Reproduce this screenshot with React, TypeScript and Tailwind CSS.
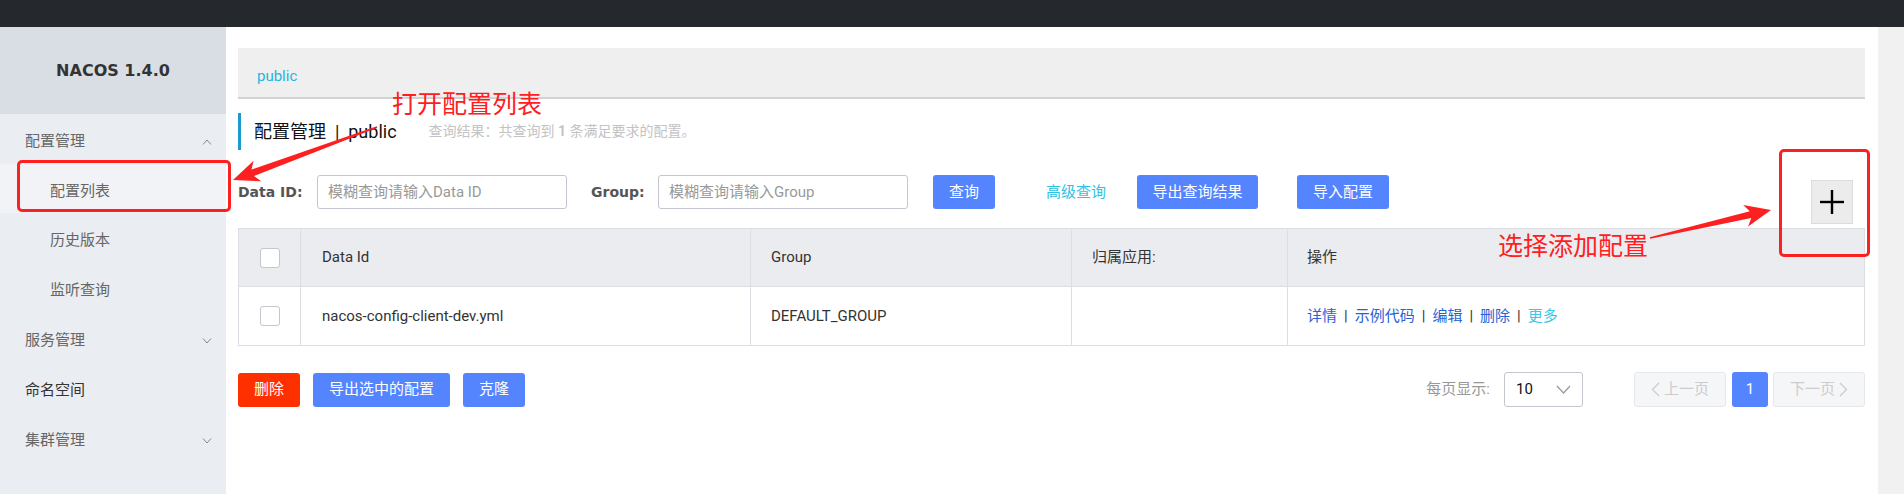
import React from 'react';

const font = { fontFamily: 'Roboto, "Noto Sans CJK SC", sans-serif' };
const boldFont = { fontFamily: '"DejaVu Sans", "Noto Sans CJK SC", sans-serif' };

function arrowPoints(x1: number, y1: number, x2: number, y2: number) {
    const dx = x2 - x1;
    const dy = y2 - y1;
    const len = Math.hypot(dx, dy);
    const ux = dx / len;
    const uy = dy / len;
    const nx = -uy;
    const ny = ux;
    const headLen = 26;
    const headW = 11;
    const bx = x2 - ux * headLen;
    const by = y2 - uy * headLen;
    const nbx = x2 - ux * (headLen - 5);
    const nby = y2 - uy * (headLen - 5);
    const pts = [
        [x1 + nx * 0.8, y1 + ny * 0.8],
        [nbx + nx * 3.5, nby + ny * 3.5],
        [bx + nx * headW, by + ny * headW],
        [x2, y2],
        [bx - nx * headW, by - ny * headW],
        [nbx - nx * 3.5, nby - ny * 3.5],
        [x1 - nx * 0.8, y1 - ny * 0.8],
    ];
    return pts.map((p) => p[0].toFixed(1) + ',' + p[1].toFixed(1)).join(' ');
}

function Chevron({ up }: { up?: boolean }) {
    return (
        <svg width="10" height="6" viewBox="0 0 10 6" className="text-[#888]">
            {up ? (
                <polyline points="1,5.5 5,1 9,5.5" fill="none" stroke="currentColor" strokeWidth="1" />
            ) : (
                <polyline points="1,0.5 5,5 9,0.5" fill="none" stroke="currentColor" strokeWidth="1" />
            )}
        </svg>
    );
}

function Checkbox() {
    return <div className="w-[20px] h-[20px] rounded-[3px] border border-[#c4c6cf] bg-white" />;
}

function Btn({ children, w, red }: { children: React.ReactNode; w: string; red?: boolean }) {
    return (
        <div
            className={`${w} h-[34px] rounded-[3px] flex items-center justify-center whitespace-nowrap text-white text-[15px] ${
                red ? 'bg-[#ff3000]' : 'bg-[#5584ff]'
            }`}
        >
            {children}
        </div>
    );
}

export default function App() {
    return (
        <div className="relative w-[1904px] h-[494px] overflow-hidden bg-white text-[#333]" style={font}>
            <div className="h-[27px] bg-[#25292e]" />
            <div className="flex h-[467px]">
                {/* sidebar */}
                <aside className="w-[226px] bg-[#eaedf1] flex flex-col text-[15px] text-[#666]">
                    <div className="h-[87px] bg-[#d9dee5] flex items-center justify-center text-[16px] font-bold text-[#333]" style={boldFont}>
                        NACOS 1.4.0
                    </div>
                    <div className="h-[50px] pl-[25px] pr-[14px] pt-[5px] flex items-center justify-between">
                        <span>配置管理</span>
                        <Chevron up />
                    </div>
                    <div className="h-[49px] pl-[50px] pt-[5px] flex items-center bg-[#f2f3f6]">配置列表</div>
                    <div className="h-[50px] pl-[50px] pt-[5px] flex items-center">历史版本</div>
                    <div className="h-[50px] pl-[50px] pt-[5px] flex items-center">监听查询</div>
                    <div className="h-[50px] pl-[25px] pr-[14px] pt-[5px] flex items-center justify-between">
                        <span>服务管理</span>
                        <Chevron />
                    </div>
                    <div className="h-[50px] pl-[25px] pt-[5px] flex items-center text-[#333]">命名空间</div>
                    <div className="h-[50px] pl-[25px] pr-[14px] pt-[5px] flex items-center justify-between">
                        <span>集群管理</span>
                        <Chevron />
                    </div>
                </aside>

                {/* main */}
                <main className="flex-1 pl-[12px] pr-[13px] pt-[21px]">
                    <div className="h-[51px] bg-[#efefef] border-b-2 border-[#d2d2d2] pl-[19px] pt-[8px] flex items-center text-[15px] text-[#1fb5dd]">
                        public
                    </div>

                    <div className="mt-[14px] h-[37px] border-l-[3px] border-[#1a9bd0] pl-[13px] flex items-center">
                        <span className="text-[18px] text-[#111]">配置管理&nbsp;&nbsp;|&nbsp;&nbsp;public</span>
                        <span className="ml-[32px] text-[14px] text-[#c3c3c3]">
                            查询结果：共查询到 <b className="font-bold">1</b> 条满足要求的配置。
                        </span>
                    </div>

                    <div className="mt-[25px] flex items-start h-[49px]">
                        <div className="w-[79px] h-[34px] flex items-center text-[14px] font-bold text-[#555]" style={boldFont}>
                            Data ID:
                        </div>
                        <div className="w-[250px] h-[34px] rounded-[3px] border border-[#c4c6cf] pl-[10px] flex items-center text-[15px] text-[#999]">
                            模糊查询请输入Data ID
                        </div>
                        <div className="ml-[24px] w-[67px] h-[34px] flex items-center text-[14px] font-bold text-[#555]" style={boldFont}>
                            Group:
                        </div>
                        <div className="w-[250px] h-[34px] rounded-[3px] border border-[#c4c6cf] pl-[10px] flex items-center text-[15px] text-[#999]">
                            模糊查询请输入Group
                        </div>
                        <div className="ml-[25px]">
                            <Btn w="w-[62px]">查询</Btn>
                        </div>
                        <div className="ml-[51px] w-[60px] h-[34px] flex items-center whitespace-nowrap text-[15px] text-[#2fc2e4]">高级查询</div>
                        <div className="ml-[31px]">
                            <Btn w="w-[121px]">导出查询结果</Btn>
                        </div>
                        <div className="ml-[39px]">
                            <Btn w="w-[92px]">导入配置</Btn>
                        </div>
                        <div className="ml-auto mr-[12px] mt-[5px] w-[42px] h-[44px] bg-[#ececec] border border-[#dcdcdc] flex items-center justify-center">
                            <svg width="26" height="26" viewBox="0 0 26 26">
                                <line x1="13" y1="1" x2="13" y2="25" stroke="#000" strokeWidth="2.4" />
                                <line x1="1" y1="13" x2="25" y2="13" stroke="#000" strokeWidth="2.4" />
                            </svg>
                        </div>
                    </div>

                    <div className="mt-[4px] border-t border-l border-[#dcdee3] text-[15px]">
                        <div className="grid grid-cols-[62px_450px_321px_216px_1fr] h-[58px] bg-[#ebecf0] text-[#333]">
                            <div className="border-r border-b border-[#dcdee3] flex items-center justify-center">
                                <Checkbox />
                            </div>
                            <div className="border-r border-b border-[#dcdee3] pl-[21px] flex items-center">Data Id</div>
                            <div className="border-r border-b border-[#dcdee3] pl-[20px] flex items-center">Group</div>
                            <div className="border-r border-b border-[#dcdee3] pl-[20px] flex items-center">归属应用:</div>
                            <div className="border-r border-b border-[#dcdee3] pl-[19px] flex items-center">操作</div>
                        </div>
                        <div className="grid grid-cols-[62px_450px_321px_216px_1fr] h-[59px] bg-white text-[#333]">
                            <div className="border-r border-b border-[#dcdee3] flex items-center justify-center">
                                <Checkbox />
                            </div>
                            <div className="border-r border-b border-[#dcdee3] pl-[21px] flex items-center">nacos-config-client-dev.yml</div>
                            <div className="border-r border-b border-[#dcdee3] pl-[20px] flex items-center">DEFAULT_GROUP</div>
                            <div className="border-r border-b border-[#dcdee3]" />
                            <div className="border-r border-b border-[#dcdee3] pl-[19px] flex items-center gap-[7px]">
                                <span className="text-[#2a62d6]">详情</span>
                                <span className="text-[#333]">|</span>
                                <span className="text-[#2a62d6]">示例代码</span>
                                <span className="text-[#333]">|</span>
                                <span className="text-[#2a62d6]">编辑</span>
                                <span className="text-[#333]">|</span>
                                <span className="text-[#2a62d6]">删除</span>
                                <span className="text-[#333]">|</span>
                                <span className="text-[#3dc5ea]">更多</span>
                            </div>
                        </div>
                    </div>

                    <div className="mt-[26px] flex items-center h-[35px]">
                        <Btn w="w-[62px]" red>删除</Btn>
                        <div className="ml-[13px]">
                            <Btn w="w-[137px]">导出选中的配置</Btn>
                        </div>
                        <div className="ml-[13px]">
                            <Btn w="w-[62px]">克隆</Btn>
                        </div>

                        <div className="ml-auto flex items-center">
                            <span className="text-[15px] text-[#999]">每页显示:</span>
                            <div className="ml-[14px] w-[79px] h-[35px] rounded-[3px] border border-[#c4c6cf] pl-[11px] pr-[11px] flex items-center justify-between">
                                <span className="text-[15px] text-[#111]">10</span>
                                <svg width="15" height="9" viewBox="0 0 15 9">
                                    <polyline points="1,1 7.5,8 14,1" fill="none" stroke="#999" strokeWidth="1.2" />
                                </svg>
                            </div>
                            <div className="ml-[51px] w-[92px] h-[35px] rounded-[3px] border border-[#e6e7eb] bg-[#f5f6f8] flex items-center justify-center gap-[4px] text-[15px] text-[#ccc]">
                                <svg width="9" height="15" viewBox="0 0 9 15">
                                    <polyline points="8,1 1.5,7.5 8,14" fill="none" stroke="#ccc" strokeWidth="1.3" />
                                </svg>
                                <span>上一页</span>
                            </div>
                            <div className="ml-[6px] w-[36px] h-[35px] rounded-[3px] bg-[#5584ff] flex items-center justify-center text-[15px] text-white">
                                1
                            </div>
                            <div className="ml-[5px] w-[92px] h-[35px] rounded-[3px] border border-[#e6e7eb] bg-[#f5f6f8] flex items-center justify-center gap-[4px] text-[15px] text-[#ccc]">
                                <span>下一页</span>
                                <svg width="9" height="15" viewBox="0 0 9 15">
                                    <polyline points="1,1 7.5,7.5 1,14" fill="none" stroke="#ccc" strokeWidth="1.3" />
                                </svg>
                            </div>
                        </div>
                    </div>
                </main>

                <div className="w-[26px] bg-[#f1f1f1]" />
            </div>

            {/* annotations drawn over the screenshot */}
            <div className="absolute left-[17px] top-[160px] w-[214px] h-[52px] border-[3px] border-[#fe2020] rounded-[5px]" />
            <div className="absolute left-[1779px] top-[149px] w-[91px] h-[108px] border-[3px] border-[#fe2020] rounded-[5px]" />
            <div className="absolute left-[392px] top-[92px] text-[25px] leading-none text-[#fe2020]">打开配置列表</div>
            <div className="absolute left-[1498px] top-[234px] text-[25px] leading-none text-[#fe2020]">选择添加配置</div>
            <svg className="absolute left-0 top-0 pointer-events-none" width="1904" height="494">
                <polygon points={arrowPoints(377, 127, 233, 180)} fill="#fe2020" />
                <polygon points={arrowPoints(1650, 238, 1771, 210)} fill="#fe2020" />
            </svg>
        </div>
    );
}
